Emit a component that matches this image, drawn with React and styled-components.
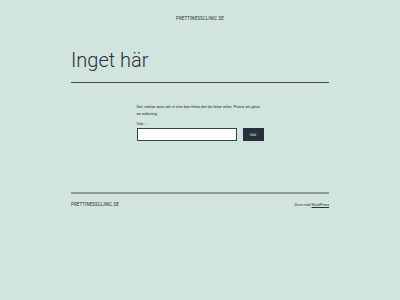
import React from 'react';
import styled, { createGlobalStyle } from 'styled-components';

const GlobalStyle = createGlobalStyle`
    html, body {
        margin: 0;
        padding: 0;
        background: #d1e4dd;
    }
    body {
        font-family: Roboto, "Liberation Sans", sans-serif;
        color: #28303d;
    }
`;

const Page = styled.div`
    width: 400px;
    height: 300px;
    display: flex;
    flex-direction: column;
    align-items: center;
`;

const Header = styled.header`
    width: 258px;
    padding-top: 16px;
    display: flex;
    justify-content: center;
`;

const SiteTitle = styled.a`
    font-size: 4.5px;
    line-height: 6px;
    text-transform: uppercase;
    color: #28303d;
    text-decoration: none;
    letter-spacing: 0.02em;
`;

const TitleBlock = styled.div`
    width: 258px;
    margin-top: 25px;
    padding-bottom: 9px;
    border-bottom: 1px solid #3b4450;
`;

const PageTitle = styled.h1`
    margin: 0;
    font-size: 20px;
    font-weight: 300;
    line-height: 26px;
`;

const Content = styled.main`
    width: 128px;
    margin-top: 20px;
    margin-left: 1px;
    display: flex;
    flex-direction: column;
`;

const Lead = styled.p`
    margin: 0;
    font-size: 4.2px;
    line-height: 7px;
`;

const Label = styled.label`
    margin-top: 4px;
    font-size: 4px;
    line-height: 6px;
`;

const SearchRow = styled.form`
    margin-top: 1px;
    display: flex;
    gap: 6px;
    width: 127px;
`;

const Input = styled.input`
    box-sizing: border-box;
    width: 100px;
    height: 13px;
    margin: 0;
    padding: 0 3px;
    border: 1px solid #39414d;
    background: #fff;
    outline: none;
`;

const Button = styled.button`
    box-sizing: border-box;
    width: 21px;
    height: 13px;
    margin: 0;
    padding: 0;
    border: none;
    background: #28303d;
    color: #d1e4dd;
    font-family: inherit;
    font-size: 4px;
`;

const Spacer = styled.div`
    height: 51px;
`;

const Footer = styled.footer`
    width: 258px;
    border-top: 2px solid #8f9b9c;
    padding-top: 8px;
    display: flex;
    justify-content: space-between;
    align-items: center;
`;

const FooterTitle = styled.span`
    font-size: 4.5px;
    text-transform: uppercase;
    letter-spacing: 0.02em;
`;

const Powered = styled.span`
    font-size: 3.6px;
`;

const PoweredLink = styled.a`
    color: #28303d;
    text-decoration: underline;
`;

function App() {
    return (
        <>
            <GlobalStyle />
            <Page>
                <Header>
                    <SiteTitle href="#">prettinessclinic.se</SiteTitle>
                </Header>
                <TitleBlock>
                    <PageTitle>Inget här</PageTitle>
                </TitleBlock>
                <Content>
                    <Lead>Det verkar som att vi inte kan hitta det du letar efter. Prova att göra en sökning.</Lead>
                    <Label>Sök …</Label>
                    <SearchRow onSubmit={(e) => e.preventDefault()}>
                        <Input type="search" />
                        <Button type="submit">Sök</Button>
                    </SearchRow>
                </Content>
                <Spacer />
                <Footer>
                    <FooterTitle>prettinessclinic.se</FooterTitle>
                    <Powered>Drivs med <PoweredLink href="#">WordPress</PoweredLink></Powered>
                </Footer>
            </Page>
        </>
    );
}

export default App;
